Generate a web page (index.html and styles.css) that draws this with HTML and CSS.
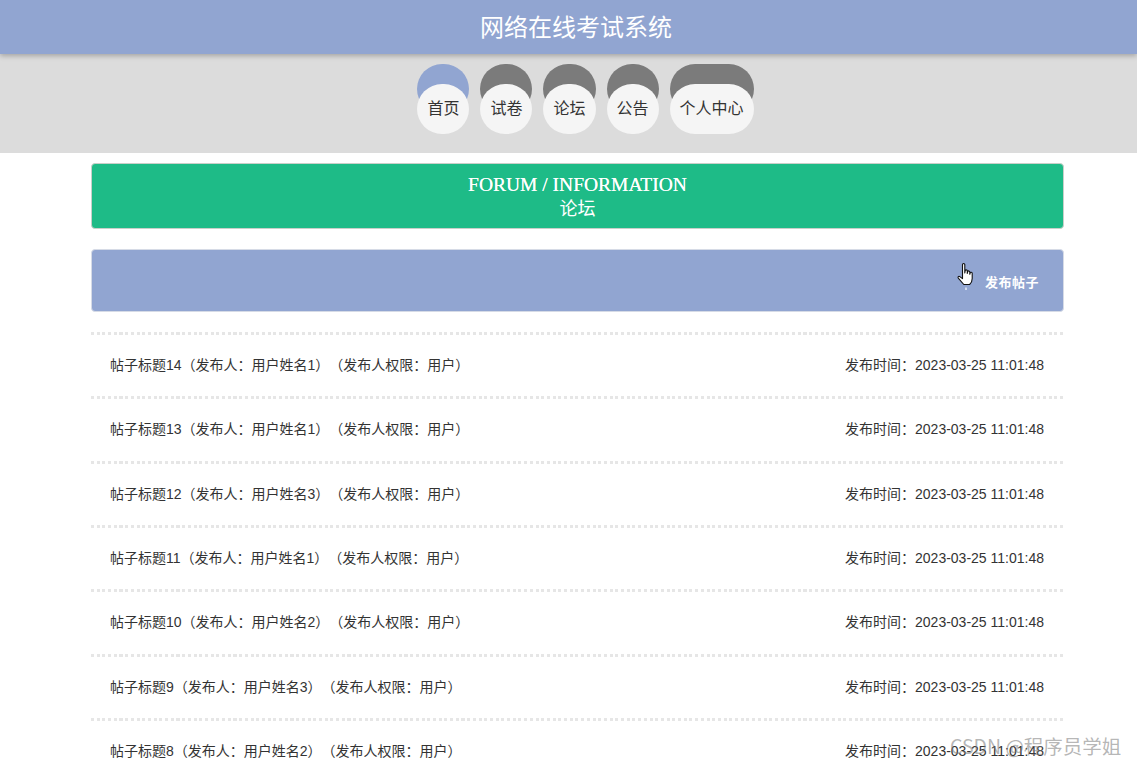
FILE: index.html
```html
<!DOCTYPE html>
<html lang="zh">
<head>
<meta charset="utf-8">
<title>网络在线考试系统</title>
<link rel="stylesheet" href="styles.css">
</head>
<body>
<header class="top">
  <div class="title">网络在线考试系统</div>
</header>
<nav class="nav">
  <a class="nav-item active">首页</a>
  <a class="nav-item">试卷</a>
  <a class="nav-item">论坛</a>
  <a class="nav-item">公告</a>
  <a class="nav-item">个人中心</a>
</nav>
<main class="content">
  <section class="banner">
    <div class="banner-en">FORUM / INFORMATION</div>
    <div class="banner-cn">论坛</div>
  </section>
  <section class="toolbar">
    <span class="publish">发布帖子</span>
    <svg class="cursor" width="20" height="30" viewBox="0 0 20 30">
      <path d="M6.5 2.5 C6.5 1.2 8.8 1.2 8.8 2.5 L8.8 11 L9.2 8.6 C9.4 7.5 11.3 7.6 11.3 8.8 L11.3 11.5 L11.7 9.6 C11.9 8.6 13.8 8.7 13.8 9.9 L13.8 12.3 L14.2 10.8 C14.5 9.9 16.2 10.1 16.2 11.2 L16.2 16.5 C16.2 19.5 14.8 21.5 13.6 22.5 L7.8 22.5 L2.3 16.2 C1.5 15.2 2.7 13.8 3.8 14.6 L6.5 16.6 Z" fill="#ffffff" stroke="#111" stroke-width="1.1" stroke-linejoin="round"/>
      <path d="M9.4 25.5 L10.6 25.5 L10.6 28 L9.4 28 Z" fill="#ffffff"/>
    </svg>
  </section>
  <ul class="posts">
    <li class="post"><span class="post-title">帖子标题14（发布人：用户姓名1）（发布人权限：用户）</span><span class="post-time">发布时间：2023-03-25 11:01:48</span></li>
    <li class="post"><span class="post-title">帖子标题13（发布人：用户姓名1）（发布人权限：用户）</span><span class="post-time">发布时间：2023-03-25 11:01:48</span></li>
    <li class="post"><span class="post-title">帖子标题12（发布人：用户姓名3）（发布人权限：用户）</span><span class="post-time">发布时间：2023-03-25 11:01:48</span></li>
    <li class="post"><span class="post-title">帖子标题11（发布人：用户姓名1）（发布人权限：用户）</span><span class="post-time">发布时间：2023-03-25 11:01:48</span></li>
    <li class="post"><span class="post-title">帖子标题10（发布人：用户姓名2）（发布人权限：用户）</span><span class="post-time">发布时间：2023-03-25 11:01:48</span></li>
    <li class="post"><span class="post-title">帖子标题9（发布人：用户姓名3）（发布人权限：用户）</span><span class="post-time">发布时间：2023-03-25 11:01:48</span></li>
    <li class="post"><span class="post-title">帖子标题8（发布人：用户姓名2）（发布人权限：用户）</span><span class="post-time">发布时间：2023-03-25 11:01:48</span></li>
  </ul>
</main>
<div class="watermark">CSDN @程序员学姐</div>
</body>
</html>
```
FILE: styles.css
```css
html, body {
  margin: 0;
  padding: 0;
  overflow: hidden;
  height: 764px;
}
body {
  background: #ffffff;
  font-family: "Noto Sans CJK SC", "Liberation Sans", sans-serif;
  color: #333;
  text-spacing-trim: space-all;
}
.top {
  position: relative;
  z-index: 2;
  height: 54px;
  background: #91a5d1;
  box-shadow: 0 2px 5px rgba(0, 0, 0, 0.25);
  display: flex;
  align-items: center;
  justify-content: center;
  padding-left: 15px;
}
.title {
  color: #ffffff;
  font-size: 24px;
  line-height: 1;
  padding-bottom: 2px;
}
.nav {
  background: #dcdcdc;
  height: 99px;
  box-sizing: border-box;
  padding: 30px 0 0 34px;
  display: flex;
  justify-content: center;
  align-items: flex-start;
  gap: 11px;
}
.nav-item {
  display: flex;
  align-items: center;
  justify-content: center;
  min-width: 52px;
  box-sizing: border-box;
  height: 50px;
  padding: 0 10px 5px;
  border-radius: 26px;
  background: #f5f5f5;
  box-shadow: 0 -20px 0 #7b7b7b;
  font-size: 16px;
  color: #333;
}
.nav-item.active {
  box-shadow: 0 -20px 0 #91a5d1;
}
.content {
  width: 973px;
  margin: 10px 0 0 91px;
}
.banner {
  box-sizing: border-box;
  height: 66px;
  background: #1ebb87;
  border: 1px solid #c9cfc9;
  border-radius: 4px;
  color: #ffffff;
  display: flex;
  flex-direction: column;
  align-items: center;
  justify-content: center;
}
.banner-en {
  font-family: "Liberation Serif", serif;
  font-size: 19.5px;
  line-height: 23px;
  text-shadow: 0 0 0.4px #ffffff;
}
.banner-cn {
  font-size: 18px;
  line-height: 23px;
}
.toolbar {
  position: relative;
  box-sizing: border-box;
  margin-top: 20px;
  height: 63px;
  background: #91a5d1;
  border: 1px solid #d6dbe6;
  border-radius: 4px;
  display: flex;
  align-items: center;
  justify-content: flex-end;
  padding: 2px 24px 0 0;
}
.publish {
  color: #ffffff;
  font-size: 13px;
  font-weight: bold;
  letter-spacing: 0.5px;
}
.cursor {
  position: absolute;
  left: 864px;
  top: 12px;
}
.posts {
  list-style: none;
  margin: 20px 0 0;
  padding: 0;
}
.post {
  height: 64.33px;
  box-sizing: border-box;
  padding: 0 20px 0 19px;
  display: flex;
  align-items: center;
  justify-content: space-between;
  font-size: 14px;
  color: #333;
  background-image: repeating-linear-gradient(to right, #e6e6e6 0 3px, transparent 3px 5.7px);
  background-size: 100% 3px;
  background-repeat: no-repeat;
  background-position: 0 0;
}
.post-title, .post-time {
  font-family: "Liberation Sans", "Noto Sans CJK SC", sans-serif;
}
.watermark {
  position: absolute;
  left: 950px;
  top: 731px;
  font-size: 19.5px;
  color: rgba(120, 120, 120, 0.55);
  font-family: "Noto Sans CJK SC", "Liberation Sans", sans-serif;
}
```
